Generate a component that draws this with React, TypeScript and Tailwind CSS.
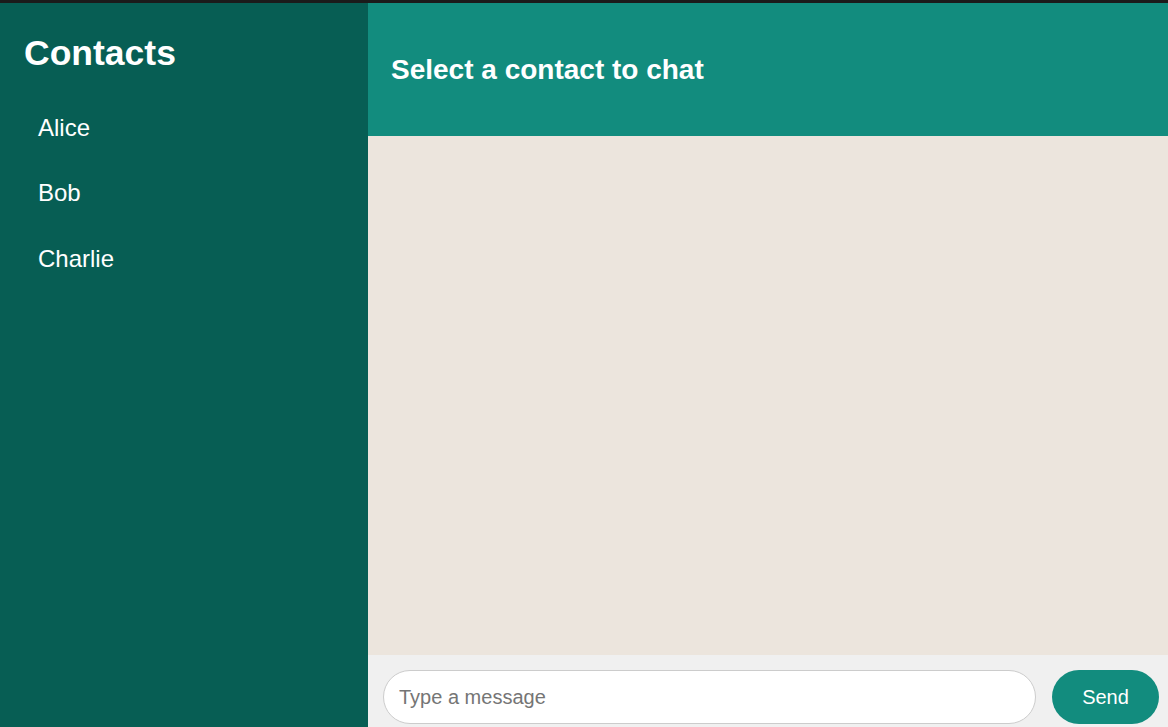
const contacts = ["Alice", "Bob", "Charlie"];

export default function App() {
  return (
    <div className="h-[727px] w-full overflow-hidden bg-[#1b1b1b] pt-[3px] font-['Liberation_Sans',Arial,sans-serif]">
      <div className="flex h-[736px]">
        <aside className="w-[368px] shrink-0 bg-[#075e54] px-[24px] pt-[30px] text-white">
          <h2 className="mb-[21px] text-[35.5px] font-bold leading-[1.15]">Contacts</h2>
          <ul>
            {contacts.map((name) => (
              <li key={name} className="cursor-pointer px-[14px] py-[19px] text-[24px] leading-[27.4px]">
                {name}
              </li>
            ))}
          </ul>
        </aside>
        <main className="flex flex-1 flex-col">
          <header className="flex h-[133px] shrink-0 items-center bg-[#128c7e] px-[23px] pt-[2px] text-white">
            <h3 className="text-[28px] font-bold leading-[1.15]">Select a contact to chat</h3>
          </header>
          <div className="flex-1 bg-[#ece5dd]" />
          <footer className="flex shrink-0 items-center gap-[16px] bg-[#f0f0f0] py-[15px] pl-[15px] pr-[9px]">
            <input
              type="text"
              placeholder="Type a message"
              className="h-[54px] flex-1 rounded-full border border-[#cccccc] bg-white px-[15px] text-[20px] text-black outline-none placeholder:text-[#757575]"
            />
            <button className="h-[54px] w-[107px] rounded-full bg-[#128c7e] text-[20px] text-white">
              Send
            </button>
          </footer>
        </main>
      </div>
    </div>
  );
}
